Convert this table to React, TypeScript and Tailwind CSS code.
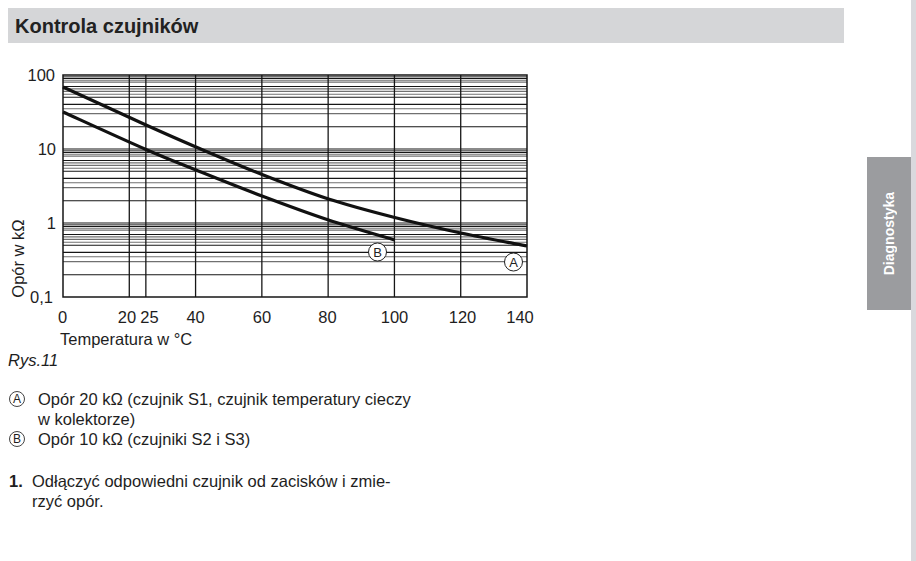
import React from 'react';

type Pt = [number, number];

const X0 = 63;
const X1 = 527;
const Y_TOP = 75;
const DEC = 74;

const tx = (t: number) => X0 + (t * (X1 - X0)) / 140;
const vy = (v: number) => 297 - (Math.log10(v) + 1) * DEC;

// sub-lines in each decade, read off the printed grid
const marks: { m: number; dark: boolean }[] = [
  { m: 2, dark: true },
  { m: 3, dark: false },
  { m: 3.5, dark: false },
  { m: 4, dark: true },
  { m: 5, dark: true },
  { m: 5.5, dark: false },
  { m: 6, dark: false },
  { m: 6.5, dark: false },
  { m: 7, dark: true },
  { m: 8, dark: false },
  { m: 8.5, dark: false },
  { m: 9, dark: true },
  { m: 9.5, dark: false },
];

const curveA: Pt[] = [
  [63, 87],
  [146, 125],
  [196, 147],
  [262, 174.5],
  [328.5, 199],
  [394.7, 217.5],
  [460.8, 233],
  [527, 246],
];

const curveB: Pt[] = [
  [63, 112],
  [146, 149.5],
  [196, 170],
  [262, 196],
  [328.5, 220],
  [394.7, 240],
];

function smooth(pts: Pt[]): string {
  let d = `M${pts[0][0]},${pts[0][1]}`;
  for (let i = 0; i < pts.length - 1; i++) {
    const p0 = pts[i - 1] ?? pts[i];
    const p1 = pts[i];
    const p2 = pts[i + 1];
    const p3 = pts[i + 2] ?? p2;
    const c1x = p1[0] + (p2[0] - p0[0]) / 6;
    const c1y = p1[1] + (p2[1] - p0[1]) / 6;
    const c2x = p2[0] - (p3[0] - p1[0]) / 6;
    const c2y = p2[1] - (p3[1] - p1[1]) / 6;
    d += ` C${c1x},${c1y} ${c2x},${c2y} ${p2[0]},${p2[1]}`;
  }
  return d;
}

const xLabels: { t: string; x: number }[] = [
  { t: '0', x: 62.6 },
  { t: '20', x: 127 },
  { t: '25', x: 149.5 },
  { t: '40', x: 195.6 },
  { t: '60', x: 262 },
  { t: '80', x: 327.5 },
  { t: '100', x: 394.5 },
  { t: '120', x: 462.5 },
  { t: '140', x: 520 },
];

const Chart: React.FC = () => {
  const hLines: { y: number; dark: boolean }[] = [];
  for (const base of [0.1, 1, 10]) {
    for (const mk of marks) hLines.push({ y: vy(base * mk.m), dark: mk.dark });
  }
  for (const v of [1, 10]) hLines.push({ y: vy(v), dark: true });

  return (
    <svg
      width={545}
      height={307}
      viewBox="0 43 545 307"
      className="block"
      style={{ fontFamily: '"Liberation Sans", Arial, sans-serif' }}
    >
      {hLines.map((l, i) => (
        <line
          key={i}
          x1={X0}
          x2={X1}
          y1={l.y}
          y2={l.y}
          stroke={l.dark ? '#161616' : '#707070'}
          strokeWidth={1.15}
        />
      ))}
      {[20, 25, 40, 60, 80, 100, 120].map((t) => (
        <line
          key={t}
          x1={tx(t)}
          x2={tx(t)}
          y1={Y_TOP}
          y2={297}
          stroke="#161616"
          strokeWidth={1.3}
        />
      ))}
      <rect
        x={X0}
        y={Y_TOP}
        width={X1 - X0}
        height={297 - Y_TOP}
        fill="none"
        stroke="#161616"
        strokeWidth={1.5}
      />

      <path d={smooth(curveA)} fill="none" stroke="#111" strokeWidth={3.2} />
      <path d={smooth(curveB)} fill="none" stroke="#111" strokeWidth={3.2} />

      <circle cx={377.5} cy={252} r={9} fill="#fff" stroke="#222" strokeWidth={1} />
      <text x={377.5} y={256.6} fontSize={13} textAnchor="middle" fill="#222">
        B
      </text>
      <circle cx={513.5} cy={262} r={9} fill="#fff" stroke="#222" strokeWidth={1} />
      <text x={513.5} y={266.6} fontSize={13} textAnchor="middle" fill="#222">
        A
      </text>

      <g fontSize={16.5} fill="#1e1e1e">
        <text x={55} y={81} textAnchor="end">100</text>
        <text x={56} y={155} textAnchor="end">10</text>
        <text x={56} y={229} textAnchor="end">1</text>
        <text x={53} y={303} textAnchor="end">0,1</text>
        {xLabels.map((l) => (
          <text key={l.t} x={l.x} y={323} textAnchor="middle">
            {l.t}
          </text>
        ))}
        <text x={60} y={345}>Temperatura w °C</text>
        <text transform="translate(24,258.5) rotate(-90)" textAnchor="middle">
          Opór w kΩ
        </text>
      </g>
    </svg>
  );
};

const Circled: React.FC<{ letter: string }> = ({ letter }) => (
  <span className="flex h-[16px] w-[16px] shrink-0 items-center justify-center rounded-full border border-[#444] text-[12px] leading-none">
    {letter}
  </span>
);

export default function App() {
  return (
    <div
      className="flex h-[561px] w-[916px] overflow-hidden bg-white text-[#1e1e1e]"
      style={{ fontFamily: '"Liberation Sans", Arial, sans-serif' }}
    >
      <div className="w-[867px] shrink-0">
        <div className="ml-2 mt-2 flex h-[35px] w-[836px] items-center bg-[#d5d6d8] pl-[7px]">
          <h1 className="text-[20px] font-bold leading-none text-[#222]">
            Kontrola czujników
          </h1>
        </div>

        <Chart />

        <p className="pl-2 text-[16.5px] italic leading-[20px]">Rys.11</p>

        <div className="mt-[19px] text-[16.5px] leading-[20px]">
          <div className="flex">
            <div className="flex h-[20px] w-[38px] shrink-0 items-center pl-[9px]">
              <Circled letter="A" />
            </div>
            <p>
              Opór 20 kΩ (czujnik S1, czujnik temperatury cieczy
              <br />w kolektorze)
            </p>
          </div>
          <div className="flex">
            <div className="flex h-[20px] w-[38px] shrink-0 items-center pl-[9px]">
              <Circled letter="B" />
            </div>
            <p>Opór 10 kΩ (czujniki S2 i S3)</p>
          </div>
        </div>

        <div className="mt-[22px] flex text-[16.5px] leading-[20px]">
          <span className="w-[32px] shrink-0 pl-[9px] font-bold">1.</span>
          <p>
            Odłączyć odpowiedni czujnik od zacisków i zmie-
            <br />
            rzyć opór.
          </p>
        </div>
      </div>

      <div className="flex w-[49px] shrink-0">
        <div className="w-[44px] pt-[157px]">
          <div className="flex h-[153px] items-center justify-center bg-[#9b9c9f]">
            <span className="rotate-180 text-[14px] font-bold text-white [writing-mode:vertical-rl]">
              Diagnostyka
            </span>
          </div>
        </div>
        <div className="h-full w-[5px] bg-[#d9d9dd]" />
      </div>
    </div>
  );
}
